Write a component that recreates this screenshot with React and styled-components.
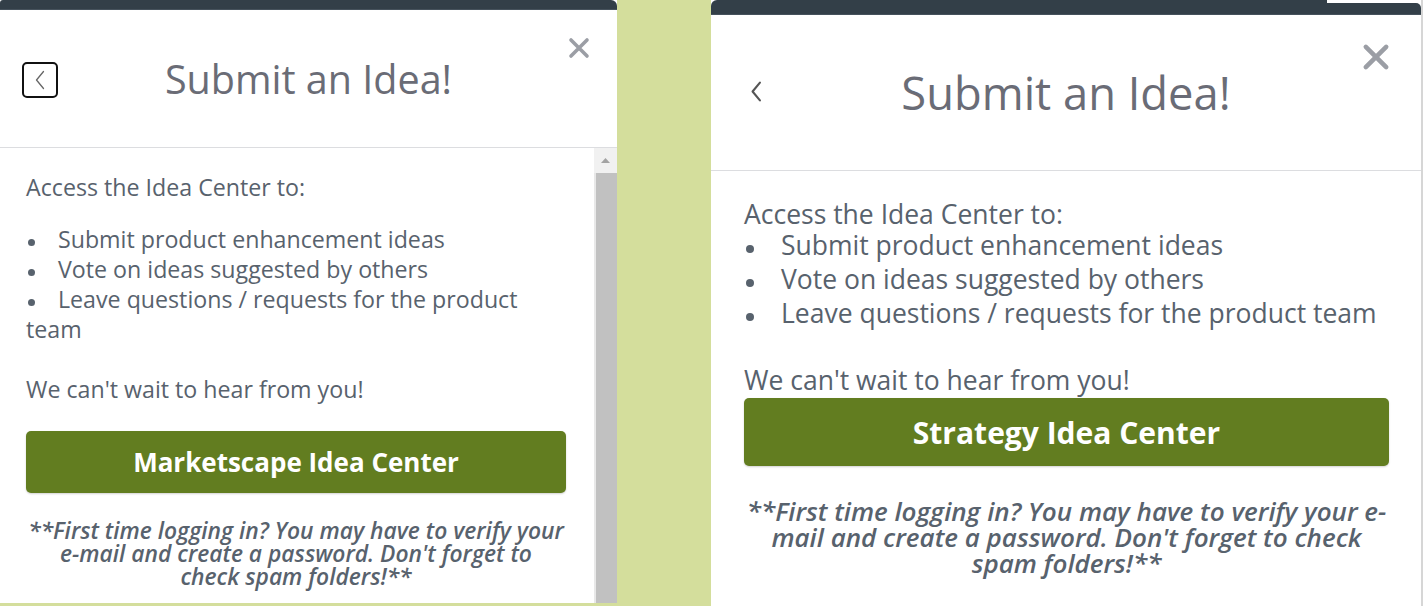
import React from 'react';
import styled, { createGlobalStyle } from 'styled-components';

const GlobalStyle = createGlobalStyle`
  html, body {
    margin: 0;
    padding: 0;
  }
  body {
    background: #d4de9c;
    font-family: "Open Sans", "Liberation Sans", sans-serif;
    overflow: hidden;
  }
`;

// two captures of the same dialog, at different zoom levels
const sizes = {
  compact: {
    width: 617, height: 603, bar: 10, header: 137, padHead: 27, backShift: -5,
    title: 39.5, closeSize: 22, closeTop: 27,
    text: 23.2, line: 30, listLine: 30, listGap: 22, bullet: 32, dot: 7,
    padL: 26, padR: 28, padTop: 24, waitGap: 30,
    btnGap: 27, btnH: 62, btnFont: 26, noteGap: 26, note: 22.8, noteLine: 23,
    noteBreak: true,
  },
  wide: {
    width: 712, height: 606, bar: 15, header: 155, padHead: 31, backShift: 9,
    title: 45.3, closeSize: 28, closeTop: 28,
    text: 26.5, line: 28, listLine: 34, listGap: 0, bullet: 37, dot: 8,
    padL: 33, padR: 32, padTop: 29, waitGap: 36,
    btnGap: 4, btnH: 68, btnFont: 30, noteGap: 32, note: 26, noteLine: 26,
    noteBreak: false,
  },
};

const Page = styled.div`
  display: flex;
  gap: 94px;
  height: 606px;
  overflow: hidden;
`;

const Panel = styled.section`
  width: ${p => p.$s.width}px;
  height: ${p => p.$s.height}px;
  background: #fff;
  display: flex;
  flex-direction: column;
  flex-shrink: 0;
  box-sizing: border-box;
  border-right: ${p => (p.$right ? '2px solid #d6d6d6' : '0')};
`;

const TopBar = styled.div`
  height: ${p => p.$s.bar}px;
  display: flex;
  flex-shrink: 0;
`;

const BarPart = styled.div`
  flex: ${p => (p.$grow ? 1 : 'none')};
  width: ${p => p.$w || 'auto'};
  margin-top: ${p => p.$drop || 0}px;
  background: #333f48;
  border-radius: ${p => p.$radius};
  border-bottom: 1px solid #46525c;
`;

const Header = styled.header`
  height: ${p => p.$s.header}px;
  border-bottom: 1px solid #dcdde0;
  display: grid;
  grid-template-columns: 1fr auto 1fr;
  align-items: center;
  padding: 0 ${p => p.$s.padHead}px;
  flex-shrink: 0;
`;

const BackBox = styled.button`
  justify-self: start;
  width: 36px;
  height: 36px;
  border: 2.5px solid #111;
  border-radius: 5px;
  background: #fff;
  padding: 0;
  display: flex;
  align-items: center;
  justify-content: center;
  margin: 2px 0 0 ${p => p.$s.backShift}px;
`;

const BackPlain = styled.button`
  justify-self: start;
  background: none;
  border: 0;
  padding: 0;
  display: flex;
  margin: -2px 0 0 ${p => p.$s.backShift}px;
`;

const Title = styled.h1`
  margin: 0;
  font-weight: 400;
  font-size: ${p => p.$s.title}px;
  color: #6a6c76;
  white-space: nowrap;
`;

const Close = styled.button`
  justify-self: end;
  align-self: start;
  margin-top: ${p => p.$s.closeTop}px;
  background: none;
  border: 0;
  padding: 0;
  display: flex;
`;

const BodyRow = styled.div`
  flex: 1;
  display: flex;
  min-height: 0;
`;

const Content = styled.div`
  flex: 1;
  padding: ${p => p.$s.padTop}px ${p => p.$s.padR}px 0 ${p => p.$s.padL}px;
  color: #58626d;
  font-size: ${p => p.$s.text}px;
`;

const Para = styled.p`
  margin: 0;
  line-height: ${p => p.$s.line}px;
`;

const List = styled.div`
  margin: ${p => p.$s.listGap}px 0 ${p => p.$s.waitGap}px;
  line-height: ${p => p.$s.listLine}px;
`;

const Item = styled.div``;

const Dot = styled.span`
  display: inline-block;
  width: ${p => p.$s.bullet}px;
  vertical-align: middle;
  &::before {
    content: '';
    display: block;
    width: ${p => p.$s.dot}px;
    height: ${p => p.$s.dot}px;
    margin-left: 2px;
    margin-top: 2px;
    border-radius: 50%;
    background: #58626d;
  }
`;

const CenterButton = styled.button`
  display: block;
  width: 100%;
  height: ${p => p.$s.btnH}px;
  margin-top: ${p => p.$s.btnGap}px;
  background: #627d20;
  border: 0;
  border-radius: 5px;
  box-shadow: 0 1px 2px rgba(0, 0, 0, 0.18);
  color: #fff;
  font-family: "Open Sans", "Liberation Sans", sans-serif;
  font-weight: 700;
  font-size: ${p => p.$s.btnFont}px;
`;

const Note = styled.p`
  margin: ${p => p.$s.noteGap}px 0 0;
  text-align: center;
  font-style: italic;
  font-weight: 600;
  font-size: ${p => p.$s.note}px;
  line-height: ${p => p.$s.noteLine}px;
  color: #58626d;
`;

const Scrollbar = styled.div`
  width: 23px;
  display: flex;
  flex-direction: column;
  background: #e8e8e8;
`;

const ScrollArrow = styled.div`
  height: 25px;
  background: #f1f1f1;
  display: flex;
  align-items: center;
  justify-content: center;
`;

const ScrollThumb = styled.div`
  flex: 1;
  margin-left: 2px;
  background: #c1c1c1;
`;

const Chevron = ({ h = 20, color = '#555', w = 1.6 }) => (
  <svg width={h / 2} height={h} viewBox="0 0 10 20">
    <polyline points="8.5,1.5 1.5,10 8.5,18.5" fill="none" stroke={color} strokeWidth={w} strokeLinecap="round" strokeLinejoin="round" />
  </svg>
);

const CloseIcon = ({ size }) => (
  <svg width={size} height={size} viewBox="0 0 22 22">
    <path d="M3 3 L19 19 M19 3 L3 19" stroke="#9b9ea5" strokeWidth="3.6" strokeLinecap="round" />
  </svg>
);

const bullets = [
  'Submit product enhancement ideas',
  'Vote on ideas suggested by others',
  'Leave questions / requests for the product team',
];

const IdeaPanel = ({ size, right, boxedBack, scroll, label }) => {
  const s = sizes[size];
  return (
    <Panel $s={s} $right={right}>
      <TopBar $s={s}>
        {right ? (
          <>
            <BarPart $w="616px" $radius="6px 0 0 0" />
            <BarPart $grow $drop={3} $radius="0 5px 0 0" />
          </>
        ) : (
          <BarPart $grow $radius="3px 6px 0 0" />
        )}
      </TopBar>
      <Header $s={s}>
        {boxedBack ? (
          <BackBox $s={s} aria-label="Back"><Chevron h={20} color="#666" w={1.3} /></BackBox>
        ) : (
          <BackPlain $s={s} aria-label="Back"><Chevron h={21} color="#555" w={2} /></BackPlain>
        )}
        <Title $s={s}>Submit an Idea!</Title>
        <Close $s={s} aria-label="Close"><CloseIcon size={s.closeSize} /></Close>
      </Header>
      <BodyRow>
        <Content $s={s}>
          <Para $s={s}>Access the Idea Center to:</Para>
          <List $s={s}>
            {bullets.map(b => (
              <Item key={b}><Dot $s={s} />{b}</Item>
            ))}
          </List>
          <Para $s={s}>We can't wait to hear from you!</Para>
          <CenterButton $s={s}>{label}</CenterButton>
          <Note $s={s}>
            **First time logging in? You may have to verify your e-mail and create a password. Don't forget to
            {s.noteBreak ? <br /> : ' '}
            check spam folders!**
          </Note>
        </Content>
        {scroll && (
          <Scrollbar>
            <ScrollArrow>
              <svg width="9" height="5" viewBox="0 0 9 5"><polygon points="0,5 4.5,0 9,5" fill="#a3a3a3" /></svg>
            </ScrollArrow>
            <ScrollThumb />
          </Scrollbar>
        )}
      </BodyRow>
    </Panel>
  );
};

export default function App() {
  return (
    <>
      <GlobalStyle />
      <Page>
        <IdeaPanel size="compact" boxedBack scroll label="Marketscape Idea Center" />
        <IdeaPanel size="wide" right label="Strategy Idea Center" />
      </Page>
    </>
  );
}
